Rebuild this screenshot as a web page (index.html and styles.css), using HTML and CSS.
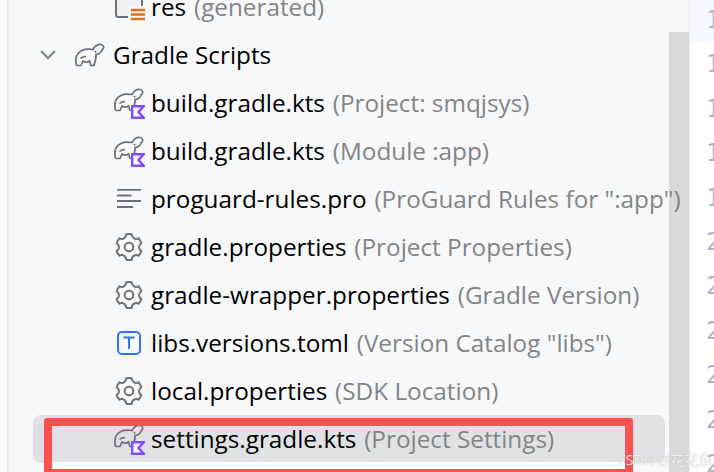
FILE: index.html
```html
<!DOCTYPE html>
<html lang="en">
<head>
  <meta charset="UTF-8" />
  <title>Project tree</title>
  <link rel="stylesheet" href="styles.css">
</head>
<body>
  <svg class="defs" width="0" height="0">
    <symbol id="elephant" viewBox="0 0 30 24">
      <path d="M1.500 22.500C0 16 1.500 10 7 7.500 11 5.500 15 6 18 6.500 20 3 23 1 26 1.500 29 2 29.500 5 27.500 6.500" />
      <path d="M27.500 6C26.500 9.500 23.500 11.500 21 11.500 21.500 15 20 18 19 22.500H16L14.500 18C12.500 19.500 10 19.500 8 18L6 22.500H1.500" />
      <path d="M5.500 15.500C7 14 9 13.500 11 13.500" />
      <circle class="eye" cx="20.500" cy="8.800" r="1" />
    </symbol>
    <symbol id="gear" viewBox="0 0 28 28">
      <circle cx="14" cy="14" r="4.300" />
      <path d="M11.300 1.300Q14 .6 16.700 1.300 16.900 4 19 5.340 21.200 6.500 23.660 5.300 25.300 7.400 26.360 9.980 24 11.500 24 14 24 16.500 26.360 18.020 25.300 20.600 23.660 22.700 21.200 21.500 19 22.660 16.900 24 16.700 26.700 14 27.400 11.300 26.700 11.100 24 9 22.660 6.800 21.500 4.340 22.700 2.700 20.600 1.640 18.020 4 16.500 4 14 4 11.500 1.640 9.980 2.700 7.400 4.340 5.300 6.800 6.500 9 5.340 11.100 4 11.300 1.300z" />
    </symbol>
    <symbol id="kotlin" viewBox="0 0 14 14">
      <path d="M1.200 1.200h11.600l-5.300 5.800 5.300 5.800H1.200z" />
    </symbol>
  </svg>

  <div class="sidebar">
    <div class="scrollbar"></div>
    <ul class="tree">
      <li class="row row-child">
        <svg class="icon res-icon" viewBox="0 0 30 30">
          <path class="folder-fill" d="M2 -4V25H15V15H28V-4z" />
          <path d="M2 -4V22.500C2 24 3 25 4.500 25H14M28 -4V14" />
          <path class="lines" d="M17 18h14M17 22.500h14M17 27h14" />
        </svg>
        <span class="label"><span class="name">res</span> <span class="hint">(generated)</span></span>
      </li>
      <li class="row row-parent">
        <svg class="chevron" viewBox="0 0 18 12"><path d="M2 2l7 7 7-7" /></svg>
        <svg class="icon elephant"><use href="#elephant" /></svg>
        <span class="label"><span class="name">Gradle Scripts</span></span>
      </li>
      <li class="row row-child">
        <span class="icon kts">
          <svg class="elephant small"><use href="#elephant" /></svg>
          <svg class="kotlin"><use href="#kotlin" /></svg>
        </span>
        <span class="label"><span class="name">build.gradle.kts</span> <span class="hint">(Project: smqjsys)</span></span>
      </li>
      <li class="row row-child">
        <span class="icon kts">
          <svg class="elephant small"><use href="#elephant" /></svg>
          <svg class="kotlin"><use href="#kotlin" /></svg>
        </span>
        <span class="label"><span class="name">build.gradle.kts</span> <span class="hint">(Module :app)</span></span>
      </li>
      <li class="row row-child">
        <svg class="icon lines-icon" viewBox="0 0 24 20"><path d="M0 .8h24M0 6.500h14.500M0 12h24M0 18h16" /></svg>
        <span class="label"><span class="name">proguard-rules.pro</span> <span class="hint">(ProGuard Rules for ":app")</span></span>
      </li>
      <li class="row row-child">
        <svg class="icon gear"><use href="#gear" /></svg>
        <span class="label"><span class="name">gradle.properties</span> <span class="hint">(Project Properties)</span></span>
      </li>
      <li class="row row-child">
        <svg class="icon gear"><use href="#gear" /></svg>
        <span class="label"><span class="name">gradle-wrapper.properties</span> <span class="hint">(Gradle Version)</span></span>
      </li>
      <li class="row row-child">
        <svg class="icon toml" viewBox="0 0 24 24">
          <rect x="1" y="1" width="22" height="22" rx="4" />
          <path d="M6.500 6.500h11M12 6.500v11.500" />
        </svg>
        <span class="label"><span class="name">libs.versions.toml</span> <span class="hint">(Version Catalog "libs")</span></span>
      </li>
      <li class="row row-child">
        <svg class="icon gear"><use href="#gear" /></svg>
        <span class="label"><span class="name">local.properties</span> <span class="hint">(SDK Location)</span></span>
      </li>
      <li class="row row-child row-selected">
        <span class="icon kts">
          <svg class="elephant small"><use href="#elephant" /></svg>
          <svg class="kotlin"><use href="#kotlin" /></svg>
        </span>
        <span class="label"><span class="name">settings.gradle.kts</span> <span class="hint">(Project Settings)</span></span>
      </li>
    </ul>
    <div class="annotation"></div>
  </div>

  <div class="gutter">
    <div class="current-line"></div>
    <span>1</span><span>1</span><span>1</span><span>1</span><span>1</span>
    <span>2</span><span>2</span><span>2</span><span>2</span><span>2</span><span>2</span>
  </div>

  <div class="watermark">CSDN @花花鱼</div>
</body>
</html>
```

FILE: styles.css
```css
/* project tree panel */
html, body {
  height: 100%;
}
body {
  margin: 0;
  display: flex;
  overflow: hidden;
  background: #fff;
  font-family: "Open Sans", "Noto Sans", sans-serif;
}
.defs {
  position: absolute;
}
.sidebar {
  position: relative;
  width: 682px;
  height: 472px;
  overflow: hidden;
  background: #f7f8fa;
  border-left: 7px solid #f9fafb;
  border-right: 1px solid #ebecf0;
  box-shadow: inset 2px 0 0 #ebecf0;
}
.tree {
  position: relative;
  list-style: none;
  margin: -17px 0 0;
  padding: 0;
}
.row {
  display: flex;
  align-items: center;
  height: 48px;
  font-size: 24.300px;
  color: #000;
}
.row-parent {
  padding-left: 32px;
}
.row-child {
  padding-left: 107px;
}
.row-selected {
  margin: 0 24px 0 26px;
  padding-left: 81px;
  background: #dfe1e5;
  border-radius: 8px;
}
.label {
  margin-top: -2px;
  white-space: nowrap;
}
.hint {
  margin-left: 1.500px;
  color: #828487;
}
.icon {
  flex: none;
  width: 30px;
  height: 26px;
  margin-right: 7px;
  fill: none;
  stroke: #6c707e;
  stroke-width: 2;
}
.chevron {
  flex: none;
  width: 18px;
  height: 12px;
  margin-right: 18px;
  fill: none;
  stroke: #7f8391;
  stroke-width: 2;
}
.elephant {
  fill: none;
  stroke: #6c707e;
  stroke-width: 1.700;
}
.eye {
  fill: #6c707e;
  stroke: none;
}
.row-parent .icon {
  margin-right: 8px;
}
.res-icon {
  height: 30px;
  overflow: visible;
}
.folder-fill {
  fill: #eff1f5;
  stroke: none;
}
.lines {
  stroke: #e66d17;
  stroke-width: 2.400;
}
.kts {
  position: relative;
  display: block;
  height: 30px;
}
.small {
  display: block;
  width: 30px;
  height: 24px;
}
.kotlin {
  position: absolute;
  right: -1px;
  bottom: -1px;
  width: 14px;
  height: 14px;
  fill: #f7f8fa;
  stroke: #834dff;
  stroke-width: 2.400;
}
.lines-icon {
  width: 24px;
  height: 20px;
  margin-left: 3px;
  margin-right: 10px;
  stroke-width: 1.800;
}
.gear {
  width: 28px;
  height: 28px;
  margin-left: 1px;
  margin-right: 8px;
}
.toml {
  width: 24px;
  height: 24px;
  margin-left: 3px;
  margin-right: 10px;
  fill: #f5f8fe;
  stroke: #3574f0;
}
.scrollbar {
  position: absolute;
  top: 32px;
  right: 0;
  bottom: 0;
  width: 20px;
  background: #d9d9d9;
}
.annotation {
  position: absolute;
  left: 37px;
  top: 418px;
  width: 573px;
  height: 43px;
  border: 8px solid #fd5050;
  border-radius: 3px;
  box-shadow: inset 0 -7px 0 #fff;
}
.gutter {
  position: relative;
  flex: 1;
  height: 474px;
  margin-top: -2px;
  overflow: hidden;
  padding-left: 16px;
  font-family: "DejaVu Sans Mono", monospace;
  font-size: 24px;
  line-height: 44.400px;
  color: #aeb3c2;
}
.gutter span {
  position: relative;
  display: block;
}
.current-line {
  position: absolute;
  left: 0;
  right: 0;
  top: 0;
  height: 44px;
  background: #f5f8fe;
}
.watermark {
  position: absolute;
  left: 617px;
  top: 449px;
  font-size: 14px;
  white-space: nowrap;
  color: rgba(255, 255, 255, 0.85);
  text-shadow: 0 0 1px rgba(120, 120, 120, 0.6);
  font-family: "Open Sans", "Noto Sans CJK SC", sans-serif;
}
```
